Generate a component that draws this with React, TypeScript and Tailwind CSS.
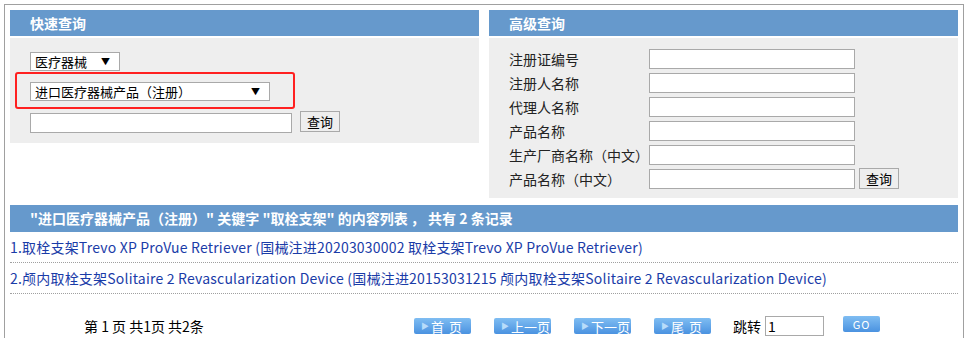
import React from 'react';

const FONT = { fontFamily: '"Microsoft YaHei", "Noto Sans CJK SC", "Noto Sans", sans-serif' };

const advancedFields = [
  '注册证编号',
  '注册人名称',
  '代理人名称',
  '产品名称',
  '生产厂商名称（中文）',
  '产品名称（中文）',
];

const results = [
  '1.取栓支架Trevo XP ProVue Retriever (国械注进20203030002 取栓支架Trevo XP ProVue Retriever)',
  '2.颅内取栓支架Solitaire 2 Revascularization Device (国械注进20153031215 颅内取栓支架Solitaire 2 Revascularization Device)',
];

const PanelHeader = ({ title }: { title: string }) => (
  <div className="h-[26px] bg-[#6699cc] pl-5 flex items-center text-[14px] font-bold text-white">{title}</div>
);

const FakeSelect = ({ label, width }: { label: string; width: string }) => (
  <div className={`${width} h-[19px] bg-white border border-[#a9a9a9] flex items-center justify-between pl-1 pr-[9px] text-[13px] text-black leading-none`}>
    <span>{label}</span>
    <span className="text-[9px]">▼</span>
  </div>
);

const GrayButton = ({ className = '' }: { className?: string }) => (
  <button className={`h-[21px] w-[40px] border border-[#a9a9a9] bg-[#eeeeee] text-[13px] text-black leading-none ${className}`}>
    查询
  </button>
);

const PageButton = ({ label }: { label: string }) => (
  <button className="h-4 w-[57px] rounded-[2px] bg-gradient-to-b from-[#7fbdf2] to-[#4a92e0] text-[13px] text-white leading-none flex items-center whitespace-nowrap overflow-hidden">
    <span className="ml-[7px] mr-[2px] text-[8px] text-[#b8dcfa]">▶</span>
    <span className={label.length === 3 && label[1] === ' ' ? 'tracking-[1px]' : ''}>{label}</span>
  </button>
);

export default function App() {
  return (
    <div className="pl-1 pt-1 bg-white" style={FONT}>
      <div className="w-[960px] h-[340px] border-l border-t border-r border-[#a0a0a0] px-[5px] pt-[5px]">
        {/* top panels */}
        <div className="flex gap-[10px] items-start">
          <div className="w-[469px]">
            <PanelHeader title="快速查询" />
            <div className="mt-[2px] h-[105px] bg-[#eeeeee] pl-5 pt-[14px] relative">
              <FakeSelect label="医疗器械" width="w-[90px]" />
              <div className="mt-[11px]">
                <FakeSelect label="进口医疗器械产品（注册）" width="w-[240px]" />
              </div>
              <div className="absolute left-[5px] top-[34px] w-[280px] h-[37px] border-2 border-[#ff2020] rounded-[3px]" />
              <div className="mt-[10px] flex items-start gap-2">
                <div className="w-[262px] h-[20px] mt-[2px] bg-white border border-[#a9a9a9]" />
                <GrayButton />
              </div>
            </div>
          </div>
          <div className="w-[469px]">
            <PanelHeader title="高级查询" />
            <div className="mt-[2px] bg-[#eeeeee] pl-5 pt-[11px] pb-[9px] flex flex-col gap-1">
              {advancedFields.map((f, i) => (
                <div key={f} className="flex items-center h-[20px]">
                  <div className="w-[140px] text-[14px] text-[#222] leading-none">{f}</div>
                  <div className="w-[206px] h-[20px] bg-white border border-[#a9a9a9]" />
                  {i === advancedFields.length - 1 && <GrayButton className="ml-[4px] -mt-[1px]" />}
                </div>
              ))}
            </div>
          </div>
        </div>

        {/* results */}
        <div className="mt-[7px] w-[948px]">
          <div className="h-[27px] bg-[#6699cc] pl-5 flex items-center text-[14px] font-bold text-white whitespace-pre">
            {'"进口医疗器械产品（注册）" 关键字 "取栓支架" 的内容列表 ， 共有 2 条记录'}
          </div>
          {results.map((r) => (
            <div key={r} className="h-[31px] border-b border-dotted border-[#a0a0a0] flex items-center text-[14px] tracking-[0.2px] text-[#1a3ca8] whitespace-nowrap">
              {r}
            </div>
          ))}
          <div className="flex items-center mt-[21px] h-[22px] text-[14px] text-black">
            <div className="ml-[74px] w-[330px] leading-none">第 1 页 共1页 共2条</div>
            <div className="flex gap-[23px]">
              <PageButton label="首 页" />
              <PageButton label="上一页" />
              <PageButton label="下一页" />
              <PageButton label="尾 页" />
            </div>
            <span className="ml-[22px] leading-none">跳转</span>
            <div className="ml-[4px] w-[59px] h-[20px] border border-[#a9a9a9] bg-white text-[14px] leading-[18px] pl-[2px]">1</div>
            <button className="ml-[19px] -mt-[4px] h-4 w-[37px] rounded-[2px] bg-gradient-to-b from-[#7fbdf2] to-[#4a92e0] text-[11px] text-white leading-none tracking-[1px]">
              GO
            </button>
          </div>
        </div>
      </div>
    </div>
  );
}
